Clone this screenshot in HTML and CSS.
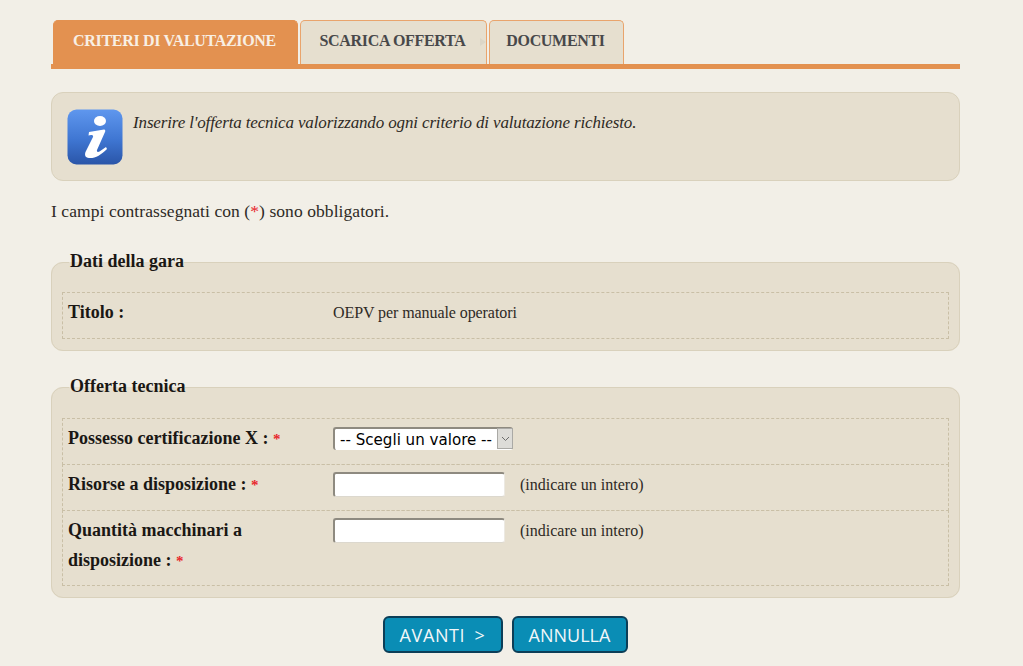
FILE: index.html
```html
<!DOCTYPE html>
<html lang="it">
<head>
    <meta charset="UTF-8">
    <title>Offerta tecnica</title>
    <link rel="stylesheet" href="styles.css">
</head>
<body>
<div class="page">
    <ul class="tabs">
        <li class="tab tab-current">CRITERI DI VALUTAZIONE</li>
        <li class="tab tab-scarica">SCARICA OFFERTA<span class="tab-arrow"></span></li>
        <li class="tab tab-documenti">DOCUMENTI</li>
    </ul>

    <div class="info-box">
        <svg class="info-icon" width="56" height="56" viewBox="0 0 56 56">
            <defs>
                <linearGradient id="infoBg" x1="0" y1="0" x2="0" y2="1">
                    <stop offset="0" stop-color="#5f97ee"/>
                    <stop offset="0.55" stop-color="#3f76d2"/>
                    <stop offset="1" stop-color="#2a55a8"/>
                </linearGradient>
            </defs>
            <rect x="0.5" y="0.5" width="55" height="55" rx="9" fill="url(#infoBg)"/>
            <ellipse cx="33" cy="12" rx="6" ry="5" fill="#fff"/>
            <path d="M22 23 L37 20.500 C38.500 20.500 38.500 22 38 23 L30 41 C29.500 43 31 43.500 32.500 42.500 L39 38 L40 40 C34 46 28 49.500 22 49 C18 48.500 17.500 46 18.500 43 L26 28 C26.500 26.500 25.500 26 24 26 L21.500 26.500 Z" fill="#fff"/>
        </svg>
        <p class="info-text">Inserire l'offerta tecnica valorizzando ogni criterio di valutazione richiesto.</p>
    </div>

    <p class="required-note">I campi contrassegnati con (<span class="req">*</span>) sono obbligatori.</p>

    <fieldset class="group group-gara">
        <legend>Dati della gara</legend>
        <div class="row row-titolo">
            <span class="row-label">Titolo :</span>
            <span class="row-value">OEPV per manuale operatori</span>
        </div>
    </fieldset>

    <fieldset class="group group-offerta">
        <legend>Offerta tecnica</legend>
        <div class="row">
            <label class="row-label">Possesso certificazione X : <span class="req">*</span></label>
            <div class="row-value row-value-select">
                <div class="select-wrap">
                    <select class="select"><option>-- Scegli un valore --</option></select>
                    <span class="select-btn">
                        <svg width="9" height="6" viewBox="0 0 9 6"><path d="M1 1 L4.500 4.500 L8 1" fill="none" stroke="#6d6d6d" stroke-width="1"/></svg>
                    </span>
                </div>
            </div>
        </div>
        <div class="row">
            <label class="row-label">Risorse a disposizione : <span class="req">*</span></label>
            <div class="row-value">
                <input class="field" type="text">
                <span class="hint">(indicare un intero)</span>
            </div>
        </div>
        <div class="row row-tall">
            <label class="row-label">Quantità macchinari a disposizione : <span class="req">*</span></label>
            <div class="row-value">
                <input class="field" type="text">
                <span class="hint">(indicare un intero)</span>
            </div>
        </div>
    </fieldset>

    <div class="buttons">
        <button type="button" class="btn btn-avanti">AVANTI &gt;</button>
        <button type="button" class="btn btn-annulla">ANNULLA</button>
    </div>
</div>
</body>
</html>
```

FILE: styles.css
```css
html, body {
    margin: 0;
    padding: 0;
    height: 666px;
    overflow: hidden;
}
body {
    background-color: #f2efe7;
    font-family: "Liberation Serif", serif;
    font-size: 18px;
    color: #2e2a25;
}
.page {
    width: 909px;
    margin-left: 51px;
    padding-top: 20px;
}

/* tabs */
.tabs {
    display: flex;
    list-style: none;
    margin: 0;
    padding: 0 0 0 2px;
    height: 44px;
    border-bottom: 5px solid #e39150;
}
.tab {
    box-sizing: border-box;
    height: 44px;
    margin-right: 2px;
    padding: 11px 2px 0 0;
    text-align: center;
    font-weight: bold;
    font-size: 16px;
    letter-spacing: -0.32px;
    color: #48484a;
    background: #e6dfcf;
    border: 1px solid #e9a46c;
    border-bottom: 0;
    border-radius: 5px 5px 0 0;
    position: relative;
}
.tab-current {
    width: 245px;
    height: 45px;
    color: #f8efe4;
    background: #e39150;
    border-color: #e39150;
}
.tab-scarica { width: 187px; }
.tab-documenti { width: 135px; }
.tab-arrow {
    position: absolute;
    right: 0;
    top: 17px;
    border-left: 6px solid #dcd6c8;
    border-top: 4px solid transparent;
    border-bottom: 4px solid transparent;
}

/* info */
.info-box {
    box-sizing: border-box;
    display: flex;
    gap: 10px;
    height: 89px;
    margin-top: 23px;
    padding: 16px 15px;
    background: #e6dfcf;
    border: 1px solid #d9d1bc;
    border-radius: 12px;
}
.info-icon { flex: none; }
.info-text {
    margin: 4px 0 0;
    font-style: italic;
    font-size: 17px;
    letter-spacing: -0.14px;
}
.required-note {
    margin: 19px 0 0;
    height: 22px;
    line-height: 22px;
    font-size: 17.500px;
    letter-spacing: 0.07px;
}
.req { color: #e8262c; }
.row-label .req { font-size: 15px; }

/* fieldsets */
.group {
    box-sizing: border-box;
    display: block;
    min-width: 0;
    margin: 0;
    padding: 20px 10px 12px;
    background: #e6dfcf;
    border: 1px solid #d9d1bc;
    border-radius: 12px;
}
.group legend {
    margin-left: 7px;
    padding: 0 0 2px 1px;
    width: auto;
    font-weight: bold;
    font-size: 18px;
    line-height: 20px;
    color: #1a1714;
}
.group-gara {
    margin-top: 29px;
    height: 100px;
    padding-top: 19px;
}
.group-offerta {
    margin-top: 25px;
    height: 222px;
}
.row {
    box-sizing: border-box;
    display: flex;
    height: 47px;
    padding: 0 5px;
    border: 1px dashed #c9bfa6;
    margin-bottom: -1px;
}
.row-tall { height: 76px; }
.row-label {
    width: 265px;
    flex: none;
    font-weight: bold;
    font-size: 18px;
    line-height: 30px;
    padding-top: 4px;
    color: #1a1714;
}
.row-value {
    display: flex;
    align-items: flex-start;
    padding-top: 7px;
    font-size: 16px;
}
.row-value-select { padding-top: 8px; }
.row-titolo .row-value {
    padding-top: 10px;
    line-height: 20px;
    letter-spacing: -0.08px;
}

/* form controls */
.select-wrap {
    position: relative;
    width: 180px;
    height: 23px;
}
.select {
    appearance: none;
    box-sizing: border-box;
    display: block;
    width: 180px;
    height: 23px;
    padding: 0 0 0 5px;
    background: #fff;
    border: 0;
    border-top: 2px solid #8e8a80;
    border-left: 2px solid #8e8a80;
    border-radius: 3px;
    font-family: "DejaVu Sans", sans-serif;
    font-size: 15.100px;
    color: #000;
}
.select-btn {
    position: absolute;
    right: 0;
    top: 1px;
    box-sizing: border-box;
    display: flex;
    align-items: center;
    justify-content: center;
    width: 16px;
    height: 21px;
    background: #dddcd8;
    border: 1px solid #aaa9a5;
}
.field {
    box-sizing: border-box;
    width: 172px;
    height: 25px;
    padding: 0 4px;
    background: #fff;
    border: 0;
    border-top: 2px solid #8e8a80;
    border-left: 2px solid #8e8a80;
    border-right: 1px solid #ece9e2;
    border-bottom: 1px solid #dcd8ce;
    border-radius: 3px;
}
.hint {
    margin-left: 15px;
    line-height: 26px;
}

/* buttons */
.buttons {
    display: flex;
    justify-content: center;
    gap: 9px;
    margin-top: 18px;
    padding-right: 1px;
}
.btn {
    box-sizing: border-box;
    height: 37px;
    padding: 0;
    background: #0a8db5;
    border: 2px solid #0c3e57;
    border-radius: 6px;
    color: #f2f7f9;
    font-family: "Open Sans", sans-serif;
    font-size: 18px;
}
.btn-avanti {
    width: 120px;
    word-spacing: 4px;
    letter-spacing: 0.6px;
}
.btn-annulla { width: 116px; }
```
